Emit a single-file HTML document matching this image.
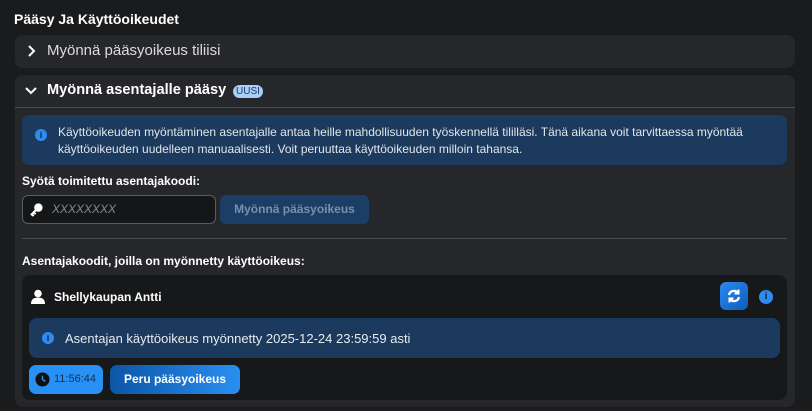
<!DOCTYPE html>
<html><head><meta charset="utf-8"><style>
*{box-sizing:border-box;margin:0;padding:0}
body{width:812px;height:411px;background:#1a1b1d;font-family:"Liberation Sans",sans-serif;color:#e8e8ea;position:relative;overflow:hidden}
.a{position:absolute}
.t{font-size:14px;font-weight:bold;color:#fff}
.panel{background:#26272a;border-radius:8px}
</style></head><body>
<div class="a t" style="left:14px;top:11px">Pääsy Ja Käyttöoikeudet</div>
<div class="a panel" style="left:15px;top:35px;width:780px;height:33px"></div>
<svg class="a" style="left:27px;top:45px" width="10" height="12" viewBox="0 0 10 12"><path d="M2 1l5 5-5 5" stroke="#fff" stroke-width="2" fill="none"/></svg>
<div class="a" style="left:47px;top:42px;font-size:15px;color:#ddd">Myönnä pääsyoikeus tiliisi</div>

<div class="a panel" style="left:15px;top:75px;width:780px;height:332px"></div>
<svg class="a" style="left:25px;top:86px" width="12" height="10" viewBox="0 0 12 10"><path d="M1 2l5 5 5-5" stroke="#fff" stroke-width="2" fill="none"/></svg>
<div class="a t" style="left:47px;top:82px;font-size:14.6px">Myönnä asentajalle pääsy</div>
<div class="a" style="left:233px;top:85px;height:13px;padding:0 3px;border-radius:7px;background:#a9cdf3;color:#1c3f6a;font-size:10px;line-height:13px">UUSI</div>
<div class="a" style="left:15px;top:107px;width:780px;height:1px;background:#4a4b4e"></div>

<div class="a" style="left:22px;top:115px;width:765px;height:50px;background:#1c3a5d;border-radius:7px"></div>
<div class="a" style="left:35px;top:129px;width:12px;height:12px;border-radius:6px;background:#2e8cf0;color:#123;font-size:9px;font-weight:bold;text-align:center;line-height:12px">i</div>
<div class="a" style="left:58px;top:124px;font-size:12px;line-height:17px;color:#e3e6ea">Käyttöoikeuden myöntäminen asentajalle antaa heille mahdollisuuden työskennellä tililläsi. Tänä aikana voit tarvittaessa myöntää<br>käyttöoikeuden uudelleen manuaalisesti. Voit peruuttaa käyttöoikeuden milloin tahansa.</div>

<div class="a" style="left:22px;top:174px;font-size:12px;font-weight:bold;color:#fff">Syötä toimitettu asentajakoodi:</div>
<div class="a" style="left:22px;top:195px;width:194px;height:29px;background:#151618;border:1px solid #5a5b5e;border-radius:6px"></div>
<svg class="a" style="left:29px;top:202px" width="15" height="15" viewBox="0 0 16 16"><circle cx="10" cy="6" r="4.5" fill="#fff"/><path d="M8 8L2 14M3 13l2 2M5 11l2 2" stroke="#fff" stroke-width="2.2"/></svg>
<div class="a" style="left:52px;top:202px;font-size:12px;font-style:italic;color:#888">XXXXXXXX</div>
<div class="a" style="left:220px;top:195px;width:149px;height:29px;background:#1b3e66;border-radius:6px;color:#7d8fa6;font-size:12px;font-weight:bold;text-align:center;line-height:29px">Myönnä pääsyoikeus</div>
<div class="a" style="left:22px;top:238px;width:765px;height:1px;background:#4a4b4e"></div>

<div class="a" style="left:22px;top:254px;font-size:12px;font-weight:bold;color:#fff">Asentajakoodit, joilla on myönnetty käyttöoikeus:</div>
<div class="a" style="left:22px;top:275px;width:765px;height:125px;background:#17181a;border-radius:8px"></div>
<svg class="a" style="left:31px;top:289px" width="14" height="15" viewBox="0 0 14 15"><circle cx="7" cy="4.5" r="3.8" fill="#fff"/><path d="M0 15c0-5 3-6.5 7-6.5s7 1.5 7 6.5z" fill="#fff"/></svg>
<div class="a" style="left:54px;top:290px;font-size:12px;font-weight:bold;color:#fff">Shellykaupan Antti</div>
<div class="a" style="left:720px;top:282px;width:28px;height:28px;border-radius:6px;background:linear-gradient(135deg,#2a8af0,#0f5cb8)"></div>
<svg class="a" style="left:726px;top:288px" width="16" height="16" viewBox="0 0 16 16" fill="none" stroke="#fff" stroke-width="2.2"><path d="M3 7a5 5 0 0 1 9-2"/><path d="M13 9a5 5 0 0 1-9 2"/><path d="M12.5 1.5v4h-4" stroke-width="2"/><path d="M3.5 14.5v-4h4" stroke-width="2"/></svg>
<div class="a" style="left:759px;top:290px;width:14px;height:14px;border-radius:7px;background:#2e8cf0;color:#123;font-size:10px;font-weight:bold;text-align:center;line-height:14px">i</div>
<div class="a" style="left:29px;top:318px;width:751px;height:40px;background:#1c3a5d;border-radius:8px"></div>
<div class="a" style="left:42px;top:332px;width:12px;height:12px;border-radius:6px;background:#2e8cf0;color:#123;font-size:9px;font-weight:bold;text-align:center;line-height:12px">i</div>
<div class="a" style="left:65px;top:331px;font-size:13px;color:#e8ebee">Asentajan käyttöoikeus myönnetty 2025-12-24 23:59:59 asti</div>
<div class="a" style="left:29px;top:365px;width:74px;height:29px;background:#2990f5;border-radius:7px"></div>
<svg class="a" style="left:35px;top:372px" width="15" height="15" viewBox="0 0 16 16"><circle cx="8" cy="8" r="7.5" fill="#111"/><path d="M8 4v4l3 2" stroke="#2990f5" stroke-width="1.6" fill="none"/></svg>
<div class="a" style="left:54px;top:365px;font-size:11px;line-height:29px;color:#15324f">11:56:44</div>
<div class="a" style="left:110px;top:365px;width:130px;height:29px;background:linear-gradient(90deg,#0d55a8,#2a8ff0);border-radius:7px;color:#fff;font-size:12px;font-weight:bold;text-align:center;line-height:29px">Peru pääsyoikeus</div>
</body></html>
